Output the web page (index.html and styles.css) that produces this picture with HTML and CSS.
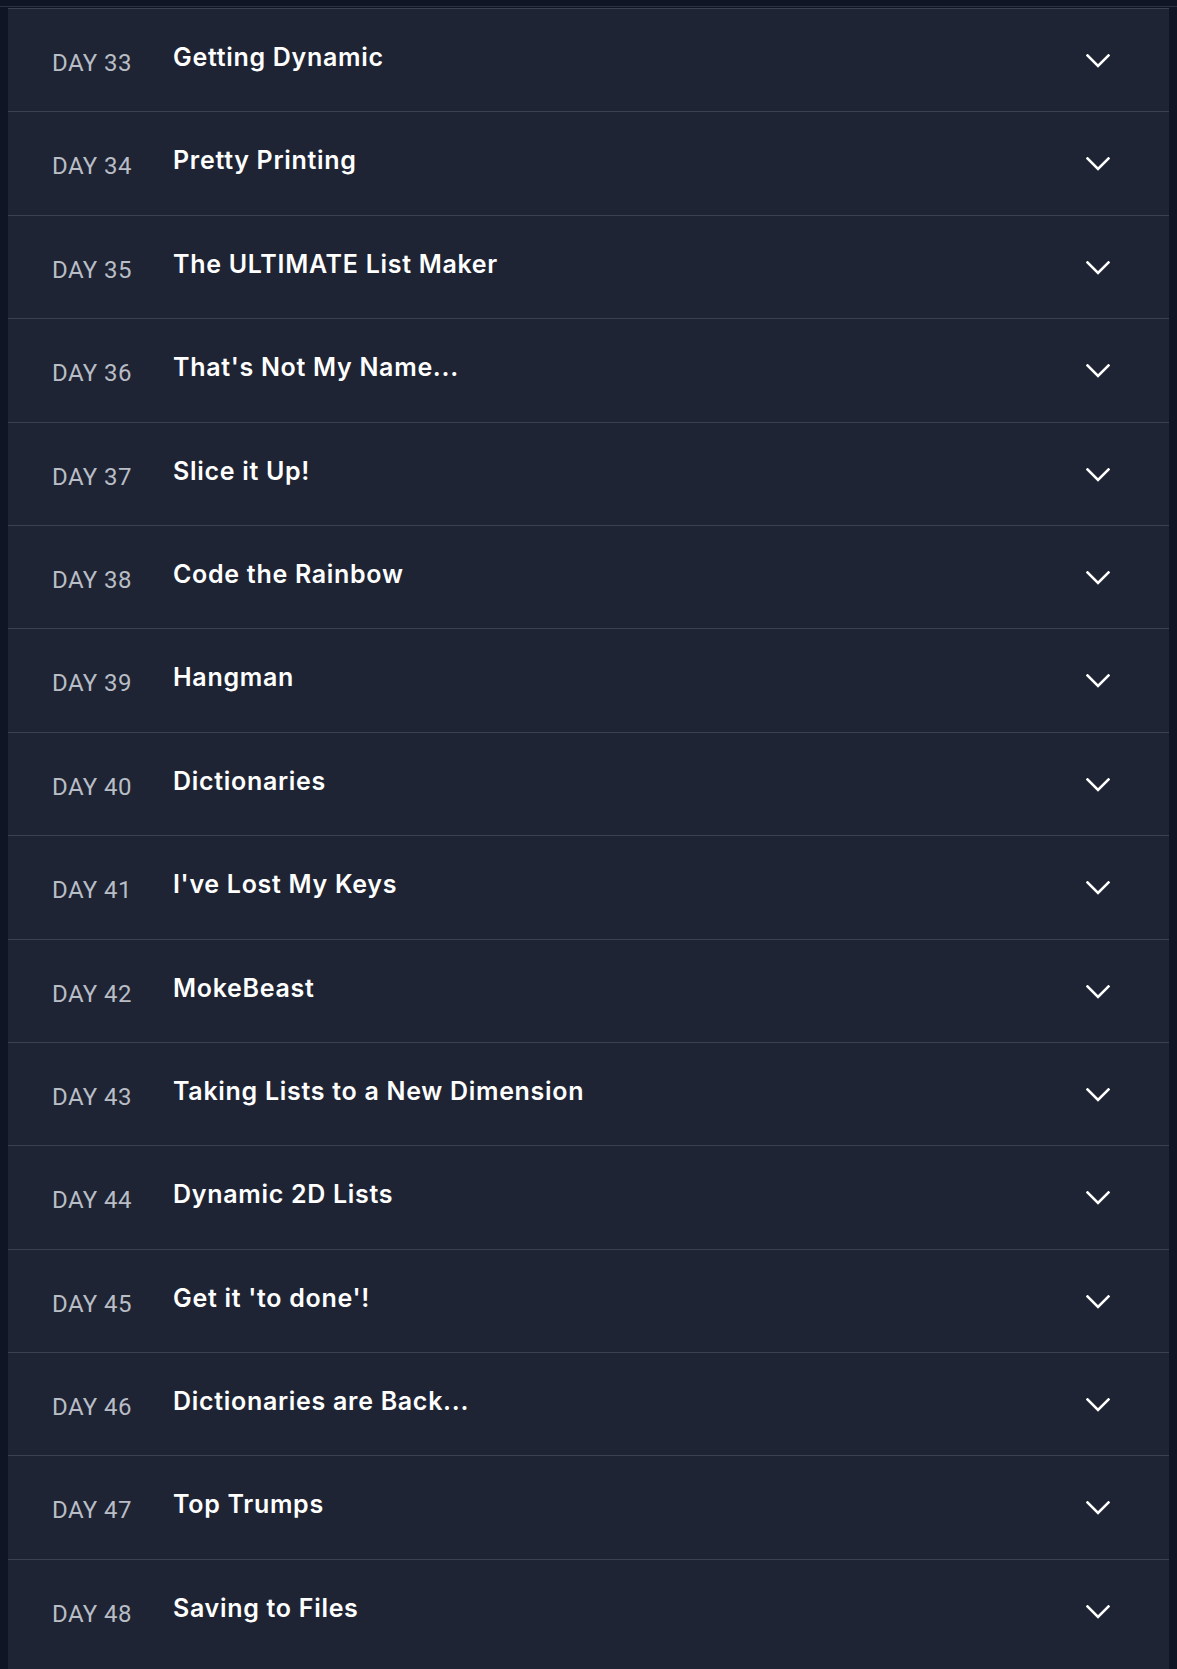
FILE: index.html
```html
<!DOCTYPE html>
<html lang="en">
<head>
<meta charset="utf-8">
<title>Days</title>
<link rel="stylesheet" href="styles.css">
</head>
<body>
<div class="topline"></div>
<div class="card">
  <div class="row"><span class="day">DAY 33</span><span class="title">Getting Dynamic</span><svg class="chev" viewBox="0 0 24 14"><path d="M1.5 1.5 L12 12 L22.5 1.5"/></svg></div>
  <div class="row"><span class="day">DAY 34</span><span class="title">Pretty Printing</span><svg class="chev" viewBox="0 0 24 14"><path d="M1.5 1.5 L12 12 L22.5 1.5"/></svg></div>
  <div class="row"><span class="day">DAY 35</span><span class="title">The ULTIMATE List Maker</span><svg class="chev" viewBox="0 0 24 14"><path d="M1.5 1.5 L12 12 L22.5 1.5"/></svg></div>
  <div class="row"><span class="day">DAY 36</span><span class="title">That's Not My Name...</span><svg class="chev" viewBox="0 0 24 14"><path d="M1.5 1.5 L12 12 L22.5 1.5"/></svg></div>
  <div class="row"><span class="day">DAY 37</span><span class="title">Slice it Up!</span><svg class="chev" viewBox="0 0 24 14"><path d="M1.5 1.5 L12 12 L22.5 1.5"/></svg></div>
  <div class="row"><span class="day">DAY 38</span><span class="title">Code the Rainbow</span><svg class="chev" viewBox="0 0 24 14"><path d="M1.5 1.5 L12 12 L22.5 1.5"/></svg></div>
  <div class="row"><span class="day">DAY 39</span><span class="title">Hangman</span><svg class="chev" viewBox="0 0 24 14"><path d="M1.5 1.5 L12 12 L22.5 1.5"/></svg></div>
  <div class="row"><span class="day">DAY 40</span><span class="title">Dictionaries</span><svg class="chev" viewBox="0 0 24 14"><path d="M1.5 1.5 L12 12 L22.5 1.5"/></svg></div>
  <div class="row"><span class="day">DAY 41</span><span class="title">I've Lost My Keys</span><svg class="chev" viewBox="0 0 24 14"><path d="M1.5 1.5 L12 12 L22.5 1.5"/></svg></div>
  <div class="row"><span class="day">DAY 42</span><span class="title">MokeBeast</span><svg class="chev" viewBox="0 0 24 14"><path d="M1.5 1.5 L12 12 L22.5 1.5"/></svg></div>
  <div class="row"><span class="day">DAY 43</span><span class="title">Taking Lists to a New Dimension</span><svg class="chev" viewBox="0 0 24 14"><path d="M1.5 1.5 L12 12 L22.5 1.5"/></svg></div>
  <div class="row"><span class="day">DAY 44</span><span class="title">Dynamic 2D Lists</span><svg class="chev" viewBox="0 0 24 14"><path d="M1.5 1.5 L12 12 L22.5 1.5"/></svg></div>
  <div class="row"><span class="day">DAY 45</span><span class="title">Get it 'to done'!</span><svg class="chev" viewBox="0 0 24 14"><path d="M1.5 1.5 L12 12 L22.5 1.5"/></svg></div>
  <div class="row"><span class="day">DAY 46</span><span class="title">Dictionaries are Back...</span><svg class="chev" viewBox="0 0 24 14"><path d="M1.5 1.5 L12 12 L22.5 1.5"/></svg></div>
  <div class="row"><span class="day">DAY 47</span><span class="title">Top Trumps</span><svg class="chev" viewBox="0 0 24 14"><path d="M1.5 1.5 L12 12 L22.5 1.5"/></svg></div>
  <div class="row"><span class="day">DAY 48</span><span class="title">Saving to Files</span><svg class="chev" viewBox="0 0 24 14"><path d="M1.5 1.5 L12 12 L22.5 1.5"/></svg></div>
</div>
</body>
</html>
```
FILE: styles.css
```css
html, body {
  margin: 0;
  padding: 0;
  background: #0f1524;
}
body {
  padding-top: 6px;
  overflow: hidden;
  height: 1669px;
  box-sizing: border-box;
}
.topline {
  height: 1px;
  background: #2b3242;
  margin-bottom: 1px;
}
.card {
  margin: 0 8px;
  background: #1e2433;
  padding-bottom: 20px;
}
.row {
  display: flex;
  align-items: flex-start;
  box-sizing: border-box;
  height: 103.4px;
  border-top: 1px solid #3a4252;
  padding-left: 44px;
  padding-right: 59px;
}
.day {
  font-family: Roboto, "Liberation Sans", sans-serif;
  font-size: 24px;
  line-height: 24px;
  color: #b9bdc6;
  width: 121px;
  flex: none;
  margin-top: 42px;
  letter-spacing: 0.4px;
}
.title {
  font-family: Inter, "Noto Sans", sans-serif;
  font-weight: 600;
  font-size: 25px;
  line-height: 25px;
  letter-spacing: 0.7px;
  color: #ffffff;
  flex: 1;
  margin-top: 36px;
}
.chev {
  width: 24px;
  height: 14px;
  flex: none;
  margin-top: 45px;
  fill: none;
  stroke: #ffffff;
  stroke-width: 2.6;
  stroke-linecap: square;
  stroke-linejoin: miter;
}
```
